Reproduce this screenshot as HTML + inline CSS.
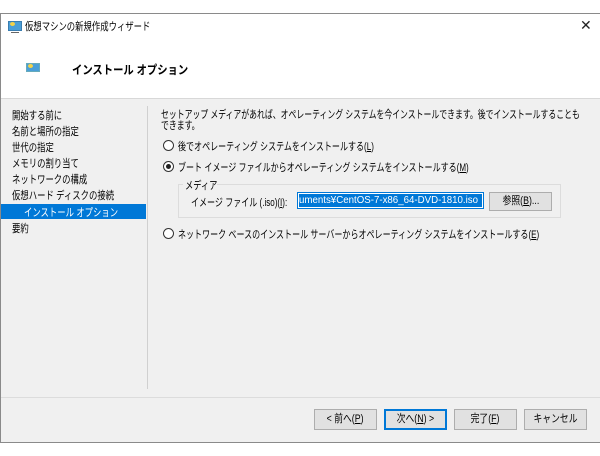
<!DOCTYPE html>
<html><head><meta charset="utf-8"><style>
*{margin:0;padding:0;box-sizing:border-box}
body{width:600px;height:456px;background:#fff;position:relative;overflow:hidden;font-family:"Liberation Sans","Noto Sans CJK JP",sans-serif;font-size:11px;color:#000}
.a{position:absolute;white-space:nowrap}
.t{transform:scaleX(0.76);transform-origin:left top}
.c{transform:scaleX(0.73);transform-origin:left top}
.win{position:absolute;left:0;top:13px;width:601px;height:430px;border:1px solid #8a8a8a;background:#f0f0f0;overflow:hidden}
.btn{position:absolute;height:21px;background:#e1e1e1;border:1px solid #adadad;text-align:center;line-height:19px;font-size:11px;overflow:hidden}
.btn span{display:inline-block;transform:scaleX(0.8)}
.radio{position:absolute;width:11px;height:11px;border:1px solid #333;border-radius:50%;background:#fff}
.nav{position:absolute;left:11px;font-size:11px}
</style></head><body>
<div class="win">
 <div class="a" style="left:0;top:0;width:600px;height:84px;background:#fff"></div>
 <div class="a" style="left:7px;top:7px;width:14px;height:10px;background:#4a9fd8;border:1px solid #3a7db0"></div>
 <div class="a" style="left:9px;top:8px;width:5px;height:4px;background:#f3d24a;border-radius:50%"></div>
 <div class="a" style="left:10px;top:18px;width:8px;height:1px;background:#666"></div>
 <div class="a t" style="left:24px;top:4px;font-size:11px">仮想マシンの新規作成ウィザード</div>
 <div class="a" style="left:579px;top:3px;font-size:14px;color:#222">✕</div>
 <div class="a" style="left:25px;top:49px;width:14px;height:9px;background:#4a9fd8;border:1px solid #6ab"></div>
 <div class="a" style="left:27px;top:50px;width:5px;height:4px;background:#f3d24a;border-radius:50%"></div>
 <div class="a" style="left:71px;top:47px;font-size:12px;font-weight:bold;transform:scaleX(0.86);transform-origin:left top">インストール オプション</div>
 <div class="a" style="left:0;top:84px;width:600px;height:1px;background:#d8d8d8"></div>
 <div class="a" style="left:146px;top:92px;width:1px;height:283px;background:#d0d0d0"></div>
 <div class="nav a t" style="top:93px">開始する前に</div>
 <div class="nav a t" style="top:109px">名前と場所の指定</div>
 <div class="nav a t" style="top:125px">世代の指定</div>
 <div class="nav a t" style="top:141px">メモリの割り当て</div>
 <div class="nav a t" style="top:157px">ネットワークの構成</div>
 <div class="nav a t" style="top:173px">仮想ハード ディスクの接続</div>
 <div class="a" style="left:0;top:190px;width:145px;height:15px;background:#0078d7"></div>
 <div class="nav a t" style="left:23px;top:190px;color:#fff">インストール オプション</div>
 <div class="nav a t" style="top:206px">要約</div>
 <div class="a" style="left:160px;top:96px;font-size:11px;line-height:11px;transform:scaleX(0.715);transform-origin:left top">セットアップ メディアがあれば、オペレーティング システムを今インストールできます。後でインストールすることも<br>できます。</div>
 <div class="radio" style="left:162px;top:126px"></div>
 <div class="a c" style="left:177px;top:124px">後でオペレーティング システムをインストールする(<u>L</u>)</div>
 <div class="radio" style="left:162px;top:147px"></div>
 <div class="a" style="left:165px;top:150px;width:5px;height:5px;border-radius:50%;background:#222"></div>
 <div class="a c" style="left:177px;top:145px">ブート イメージ ファイルからオペレーティング システムをインストールする(<u>M</u>)</div>
 <div class="a" style="left:177px;top:170px;width:383px;height:34px;border:1px solid #dcdcdc"></div>
 <div class="a" style="left:182px;top:163px;background:#f0f0f0;padding:0 2px;width:34px"><span style="display:inline-block;transform:scaleX(0.75);transform-origin:left top">メディア</span></div>
 <div class="a c" style="left:190px;top:180px">イメージ ファイル (.iso)(<u>I</u>):</div>
 <div class="a" style="left:296px;top:178px;width:187px;height:17px;border:1px solid #0078d7;background:#fff"></div>
 <div class="a" style="left:298px;top:180px;width:183px;height:13px;background:#0078d7;color:#fff;font-size:10px;line-height:13px;overflow:hidden"><span style="display:inline-block;transform:scaleX(0.97);transform-origin:left top">uments¥CentOS-7-x86_64-DVD-1810.iso</span></div>
 <div class="btn" style="left:488px;top:178px;width:63px;height:19px;line-height:17px"><span>参照(<u>B</u>)...</span></div>
 <div class="radio" style="left:162px;top:214px"></div>
 <div class="a c" style="left:177px;top:212px">ネットワーク ベースのインストール サーバーからオペレーティング システムをインストールする(<u>E</u>)</div>
 <div class="a" style="left:0;top:383px;width:600px;height:1px;background:#dcdcdc"></div>
 <div class="btn" style="left:313px;top:395px;width:63px"><span>&lt; 前へ(<u>P</u>)</span></div>
 <div class="btn" style="left:383px;top:395px;width:63px;border:1px solid #0078d7;box-shadow:inset 0 0 0 1px #0078d7"><span>次へ(<u>N</u>) &gt;</span></div>
 <div class="btn" style="left:453px;top:395px;width:63px"><span>完了(<u>F</u>)</span></div>
 <div class="btn" style="left:523px;top:395px;width:63px"><span>キャンセル</span></div>
</div>
</body></html>
